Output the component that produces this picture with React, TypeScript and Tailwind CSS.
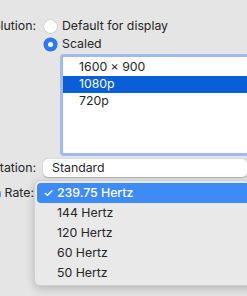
const resolutions = ["1600 × 900", "1080p", "720p"];
const rates = ["239.75 Hertz", "144 Hertz", "120 Hertz", "60 Hertz", "50 Hertz"];

function Label({ text, width = "w-[36px]" }: { text: string; width?: string }) {
  return (
    <div className={`${width} shrink-0 flex justify-end overflow-hidden whitespace-nowrap text-[#262626]`}>
      {text}
    </div>
  );
}

function Radio({ checked }: { checked?: boolean }) {
  return checked ? (
    <span className="w-[13px] h-[13px] rounded-full bg-[#2d7bf4] flex items-center justify-center shadow-[0_0_0_0.5px_#1f6ae0]">
      <span className="w-[5px] h-[5px] rounded-full bg-white" />
    </span>
  ) : (
    <span className="w-[13px] h-[13px] rounded-full bg-white shadow-[0_0_0_0.5px_#c8c8c8,0_0.5px_1px_#bdbdbd]" />
  );
}

export default function App() {
  return (
    <div
      className="relative w-[247px] h-[296px] overflow-hidden bg-[#e5e5e5] text-[12.3px] leading-none"
      style={{ fontFamily: "Inter, 'Liberation Sans', sans-serif" }}
    >
      <div className="flex flex-col pt-[19px]">
        <div className="flex items-center h-[14px]">
          <Label text="Resolution:" />
          <div className="ml-[8px] flex items-center gap-[5px] text-[#262626] whitespace-nowrap">
            <Radio />
            <span>Default for display</span>
          </div>
        </div>
        <div className="flex items-center h-[14px] mt-[4px]">
          <div className="w-[36px] shrink-0" />
          <div className="ml-[8px] flex items-center gap-[5px] text-[#262626]">
            <Radio checked />
            <span>Scaled</span>
          </div>
        </div>

        <div className="ml-[60px] mt-[3px] w-[200px] h-[102px] rounded-[4px] border-[3px] border-[#9fbaec] bg-white pt-[2px]">
          {resolutions.map((r, i) => (
            <div
              key={r}
              className={
                i === 1
                  ? "h-[17px] flex items-center pl-[16px] bg-[#0a5fd9] text-white"
                  : "h-[17px] flex items-center pl-[16px] text-[#262626]"
              }
            >
              {r}
            </div>
          ))}
        </div>

        <div className="flex items-center mt-[3px]">
          <Label text="Rotation:" />
          <div className="ml-[7px] w-[220px] h-[18px] rounded-[5px] bg-white shadow-[0_0.5px_1.5px_rgba(0,0,0,0.25)] flex items-center pl-[9px] text-[#262626]">
            Standard
          </div>
        </div>

        <div className="flex items-center mt-[7px] h-[18px]">
          <Label text="Refresh Rate:" width="w-[34px]" />
        </div>
      </div>

      <div className="absolute left-[34px] top-[180px] w-[230px] rounded-[6px] bg-[#e9e9e9] border border-[#d0d0d0] shadow-[0_3px_10px_rgba(0,0,0,0.2)] py-[2px] px-[2px]">
        {rates.map((r, i) => (
          <div
            key={r}
            className={
              i === 0
                ? "h-[20px] flex items-center rounded-[4px] bg-[#3d8bf6] text-white font-medium"
                : "h-[20px] flex items-center text-[#262626]"
            }
          >
            <span className="w-[20px] pl-[6px] text-[12px]">{i === 0 ? "✓" : ""}</span>
            <span>{r}</span>
          </div>
        ))}
      </div>
    </div>
  );
}
